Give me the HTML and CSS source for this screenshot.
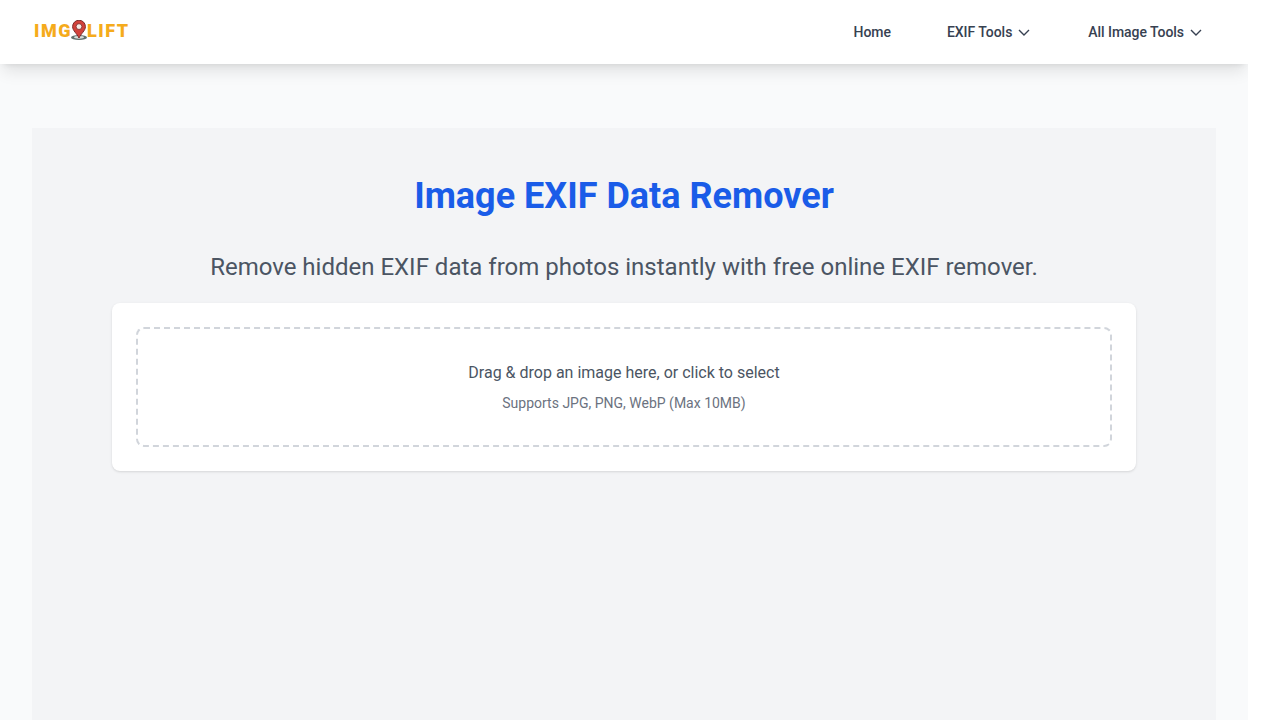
FILE: index.html
```html
<!DOCTYPE html>
<html lang="en">
<head>
<meta charset="utf-8">
<title>Image EXIF Data Remover</title>
<link rel="stylesheet" href="styles.css">
</head>
<body>
<div class="page">
  <header class="nav">
    <a class="logo" href="#">
      <span>IMG</span>
      <svg class="pin" width="18" height="21" viewBox="0 0 18 21" aria-hidden="true">
        <ellipse cx="9" cy="17.5" rx="8" ry="2.6" fill="#5f6f6c"/>
        <ellipse cx="9" cy="17.3" rx="5" ry="1.4" fill="#d9dedc"/>
        <path d="M9 18C7 13.5 2.6 10.8 2.6 6.6a6.4 6.4 0 0 1 12.8 0c0 4.2-4.4 6.9-6.4 11.4z" fill="#d2423b" stroke="#7a2a2a" stroke-width="1"/>
        <circle cx="9" cy="6.6" r="2.9" fill="#f6e9e4" stroke="#7a2a2a" stroke-width=".8"/>
      </svg>
      <span>LIFT</span>
    </a>
    <nav class="links">
      <a class="link home" href="#">Home</a>
      <a class="link exif" href="#">EXIF Tools
        <svg class="chev" width="12" height="7" viewBox="0 0 12 7" aria-hidden="true"><path d="M1 1l5 5 5-5" fill="none" stroke="#374151" stroke-width="1.4"/></svg>
      </a>
      <a class="link" href="#">All Image Tools
        <svg class="chev" width="12" height="7" viewBox="0 0 12 7" aria-hidden="true"><path d="M1 1l5 5 5-5" fill="none" stroke="#374151" stroke-width="1.4"/></svg>
      </a>
    </nav>
  </header>
  <main class="main">
    <h1 class="title">Image EXIF Data Remover</h1>
    <p class="subtitle">Remove hidden EXIF data from photos instantly with free online EXIF remover.</p>
    <section class="card">
      <div class="drop">
        <p class="drop-main">Drag &amp; drop an image here, or click to select</p>
        <p class="drop-sub">Supports JPG, PNG, WebP (Max 10MB)</p>
      </div>
    </section>
  </main>
</div>
</body>
</html>
```
FILE: styles.css
```css
* { box-sizing: border-box; }
html, body { margin: 0; height: 720px; overflow: hidden; background: #fff; }
body { font-family: Roboto, "Liberation Sans", sans-serif; }
.page { width: 1248px; height: 720px; background: #f9fafb; overflow: hidden; }
.nav {
  height: 64px; background: #fff; padding: 0 32px;
  display: flex; align-items: center; justify-content: space-between;
  box-shadow: 0 10px 15px -3px rgba(0,0,0,.1), 0 4px 6px -4px rgba(0,0,0,.1);
  position: relative;
}
.logo {
  display: flex; align-items: center; text-decoration: none;
  color: #f5ab1c; font-family: Roboto, sans-serif; font-weight: 900; font-size: 18px; letter-spacing: 1.5px;
  margin-top: -3px; margin-left: 2px;
}
.pin { margin: 0 -1px 0 -2px; }
.links { display: flex; align-items: center; padding-right: 14px; }
.link {
  display: flex; align-items: center; gap: 6px; color: #374151; text-decoration: none;
  font-size: 14px; font-weight: 500; letter-spacing: -.05px; line-height: 20px;
}
.home { margin-right: 56px; }
.exif { margin-right: 58px; }
.chev { margin-top: 1px; }
.main { margin: 64px 32px 0; height: 592px; background: #f3f4f6; padding: 48px 80px 0; }
.title { margin: 0; text-align: center; color: #1a5ce8; font-size: 36px; line-height: 40px; font-weight: 700; }
.subtitle { margin: 35px 0 0; text-align: center; color: #4b5563; font-size: 24px; line-height: 32px; font-weight: 400; }
.card {
  margin-top: 20px; background: #fff; border-radius: 8px; padding: 24px;
  box-shadow: 0 1px 3px rgba(0,0,0,.1), 0 1px 2px -1px rgba(0,0,0,.1);
}
.drop {
  height: 120px; border: 2px dashed #d1d5db; border-radius: 8px; padding-top: 32px;
  text-align: center;
}
.drop-main { margin: 0; color: #4b5563; font-size: 16px; line-height: 24px; }
.drop-sub { margin: 8px 0 0; color: #6b7280; font-size: 14px; line-height: 20px; }
```
